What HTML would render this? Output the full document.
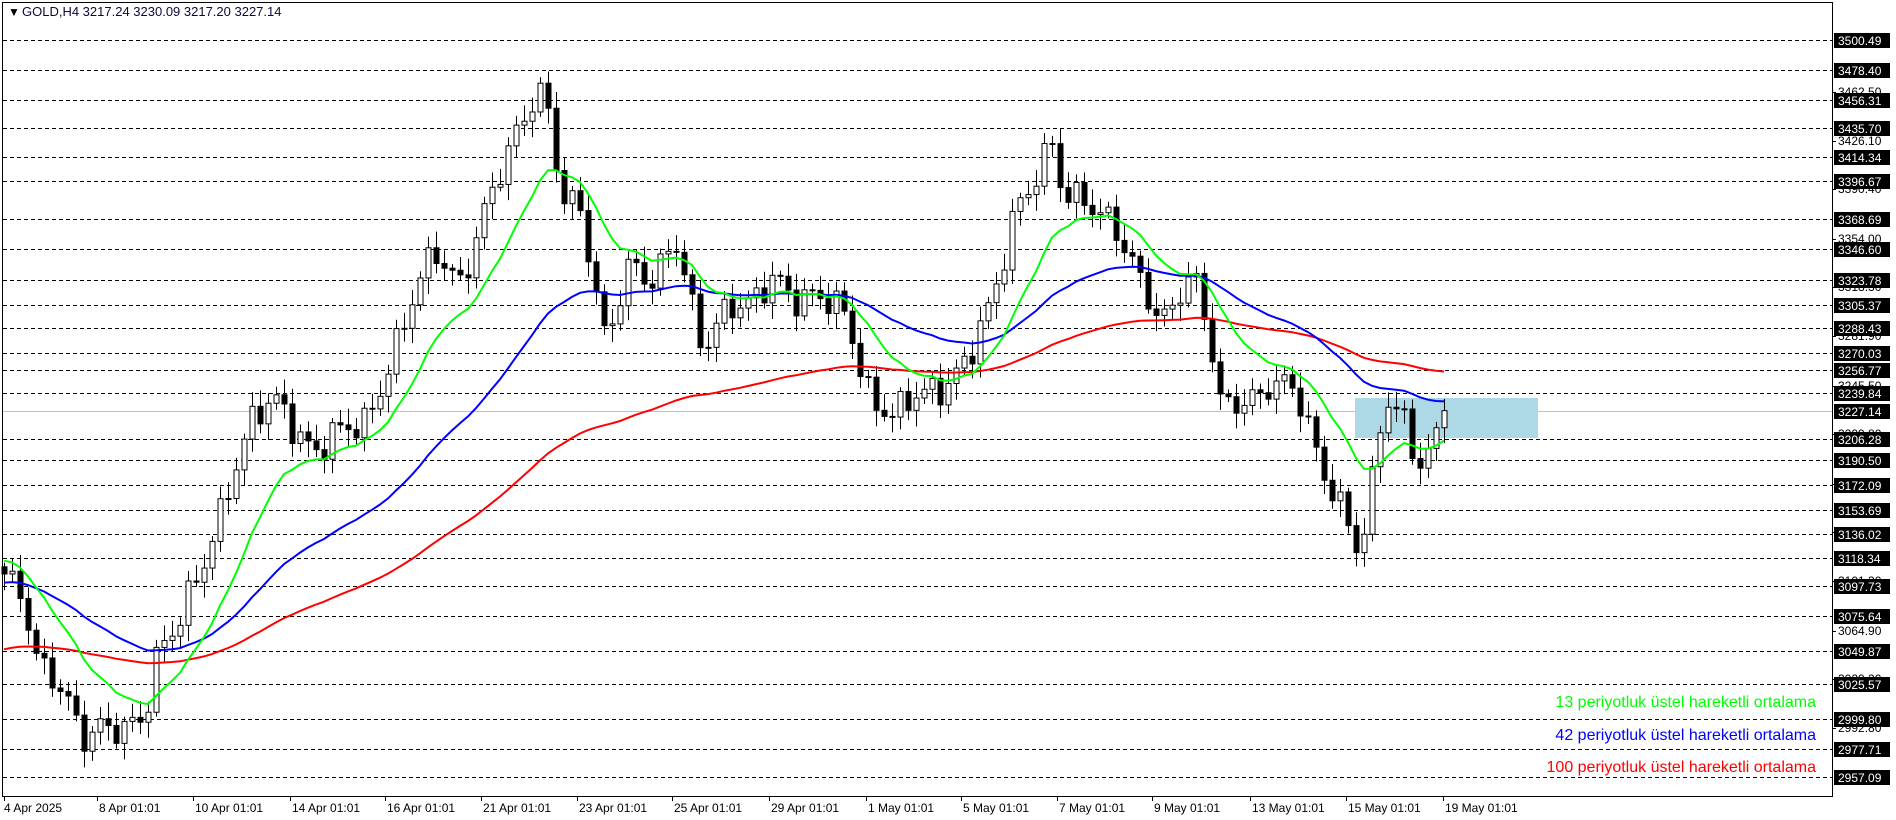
<!DOCTYPE html>
<html><head><meta charset="utf-8"><style>
html,body{margin:0;padding:0;background:#fff;width:1896px;height:820px;overflow:hidden;font-family:"Liberation Sans",sans-serif}
</style></head><body>
<svg id="s" width="1896" height="820" xmlns="http://www.w3.org/2000/svg" style="position:absolute;left:0;top:0">
<rect x="2.5" y="2.5" width="1830" height="794" fill="none" stroke="#000"/>
<g id="grid"></g>
<rect x="1355" y="398" width="183" height="40" fill="#add8e6"/>
<g id="cand"></g>
<g id="ema"></g>
<g id="lab" font-size="12" font-family="Liberation Sans, sans-serif"></g>
<g id="xl" font-size="12" font-family="Liberation Sans, sans-serif"></g>
<text x="8" y="16" font-size="12" fill="#000">▼</text>
<text x="22" y="16" font-size="13" fill="#0a0a3a">GOLD,H4  3217.24 3230.09 3217.20 3227.14</text>
<text x="1816" y="707" font-size="16" fill="#00ff00" text-anchor="end">13 periyotluk üstel hareketli ortalama</text>
<text x="1816" y="740" font-size="16" fill="#0000ff" text-anchor="end">42 periyotluk üstel hareketli ortalama</text>
<text x="1816" y="772" font-size="16" fill="#ff0000" text-anchor="end">100 periyotluk üstel hareketli ortalama</text>
</svg>
<script>
var NS="http://www.w3.org/2000/svg";
function Y(p){return 40+(3500.49-p)*1.356;}
function el(t,a,par,txt){var e=document.createElementNS(NS,t);for(var k in a)e.setAttribute(k,a[k]);if(txt!==undefined)e.textContent=txt;document.getElementById(par).appendChild(e);return e;}
var lines=[3500.49,3478.40,3456.31,3435.70,3414.34,3396.67,3368.69,3346.60,3323.78,3305.37,3288.43,3270.03,3256.77,3239.84,3206.28,3190.50,3172.09,3153.69,3136.02,3118.34,3097.73,3075.64,3049.87,3025.57,2999.80,2977.71,2957.09];
var minor=[3462.50,3426.10,3390.40,3354.00,3318.30,3281.90,3245.50,3209.80,3173.40,3137.70,3101.30,3064.90,3029.20,2992.80];
minor.forEach(function(p){var y=Math.round(Y(p));el('line',{x1:1832,x2:1836,y1:y+.5,y2:y+.5,stroke:'#000'},'lab');el('text',{x:1838,y:y+4},'lab',p.toFixed(2));});
lines.forEach(function(p){var y=Math.round(Y(p))+.5;el('line',{x1:3,x2:1832,y1:y,y2:y,stroke:'#000','stroke-dasharray':'4,3'},'grid');
el('rect',{x:1834,y:y-7.5,width:56,height:15,fill:'#000'},'lab');el('text',{x:1838,y:y+4.5,fill:'#fff'},'lab',p.toFixed(2));});
var cy=Math.round(Y(3227.14))+.5;el('line',{x1:3,x2:1832,y1:cy,y2:cy,stroke:'#c0c0c0'},'grid');
el('rect',{x:1834,y:cy-7.5,width:56,height:15,fill:'#000'},'lab');el('text',{x:1838,y:cy+4.5,fill:'#fff'},'lab','3227.14');
var xs=[["4 Apr 2025",4],["8 Apr 01:01",97],["10 Apr 01:01",193],["14 Apr 01:01",290],["16 Apr 01:01",385],["21 Apr 01:01",481],["23 Apr 01:01",577],["25 Apr 01:01",672],["29 Apr 01:01",769],["1 May 01:01",866],["5 May 01:01",961],["7 May 01:01",1057],["9 May 01:01",1152],["13 May 01:01",1250],["15 May 01:01",1346],["19 May 01:01",1443]];
xs.forEach(function(a){el('line',{x1:a[1]+.5,x2:a[1]+.5,y1:796,y2:801,stroke:'#000'},'xl');el('text',{x:a[1]+(a[0].indexOf('2025')>0?0:2),y:812},'xl',a[0]);});
var kp=[[0,3112],[20,3080],[30,3040],[50,3030],[70,2985],[100,2990],[120,3010],[130,3050],[150,3070],[170,3120],[190,3180],[210,3220],[230,3232],[260,3200],[300,3215],[320,3262],[340,3305],[360,3342],[380,3325],[400,3372],[420,3412],[440,3460],[450,3470],[465,3385],[480,3368],[500,3280],[520,3340],[540,3318],[560,3350],[580,3280],[600,3300],[620,3300],[640,3332],[660,3310],[700,3300],[720,3238],[740,3218],[760,3240],[780,3250],[800,3262],[820,3302],[840,3382],[870,3420],[880,3378],[900,3385],[920,3370],[940,3322],[960,3290],[980,3330],[990,3322],[1000,3280],[1010,3222],[1020,3230],[1040,3242],[1050,3252],[1070,3240],[1090,3190],[1110,3160],[1125,3122],[1135,3170],[1145,3232],[1160,3222],[1175,3192],[1190,3212],[1198,3227]];
function interp(d){for(var i=1;i<kp.length;i++){if(d<=kp[i][0]){var a=kp[i-1],b=kp[i];return a[1]+(b[1]-a[1])*(d-a[0])/(b[0]-a[0]);}}return kp[kp.length-1][1];}
var N=181,prev=3112,e13=3118,e42=3100,e100=3050,g=[],bl=[],rd=[];
var k13=2/14,k42=2/43,k100=2/101;
for(var i=0;i<N;i++){var x=4+i*8;var d=x/1.209;var c=interp(d)+9*Math.sin(i*1.7)+6*Math.sin(i*0.63)+4*Math.sin(i*3.1);
if(i==N-1)c=3227.14;var o=prev;var h=Math.max(o,c)+3+9*Math.abs(Math.sin(i*2.3));var l=Math.min(o,c)-3-9*Math.abs(Math.cos(i*1.9));
el('line',{x1:x+.5,x2:x+.5,y1:Y(h),y2:Y(l),stroke:'#000'},'cand');
var t=Y(Math.max(o,c)),bh=Math.max(1,Y(Math.min(o,c))-t);
el('rect',{x:x-2,y:t,width:5,height:bh,fill:c>=o?'#fff':'#000',stroke:'#000','stroke-width':1},'cand');
e13=e13+k13*(c-e13);e42=e42+k42*(c-e42);e100=e100+k100*(c-e100);
g.push(x+','+Y(e13).toFixed(1));bl.push(x+','+Y(e42).toFixed(1));rd.push(x+','+Y(e100).toFixed(1));prev=c;}
el('polyline',{points:rd.join(' '),fill:'none',stroke:'#ff0000','stroke-width':2},'ema');
el('polyline',{points:bl.join(' '),fill:'none',stroke:'#0000ff','stroke-width':2},'ema');
el('polyline',{points:g.join(' '),fill:'none',stroke:'#00ff00','stroke-width':2},'ema');
</script>
</body></html>
